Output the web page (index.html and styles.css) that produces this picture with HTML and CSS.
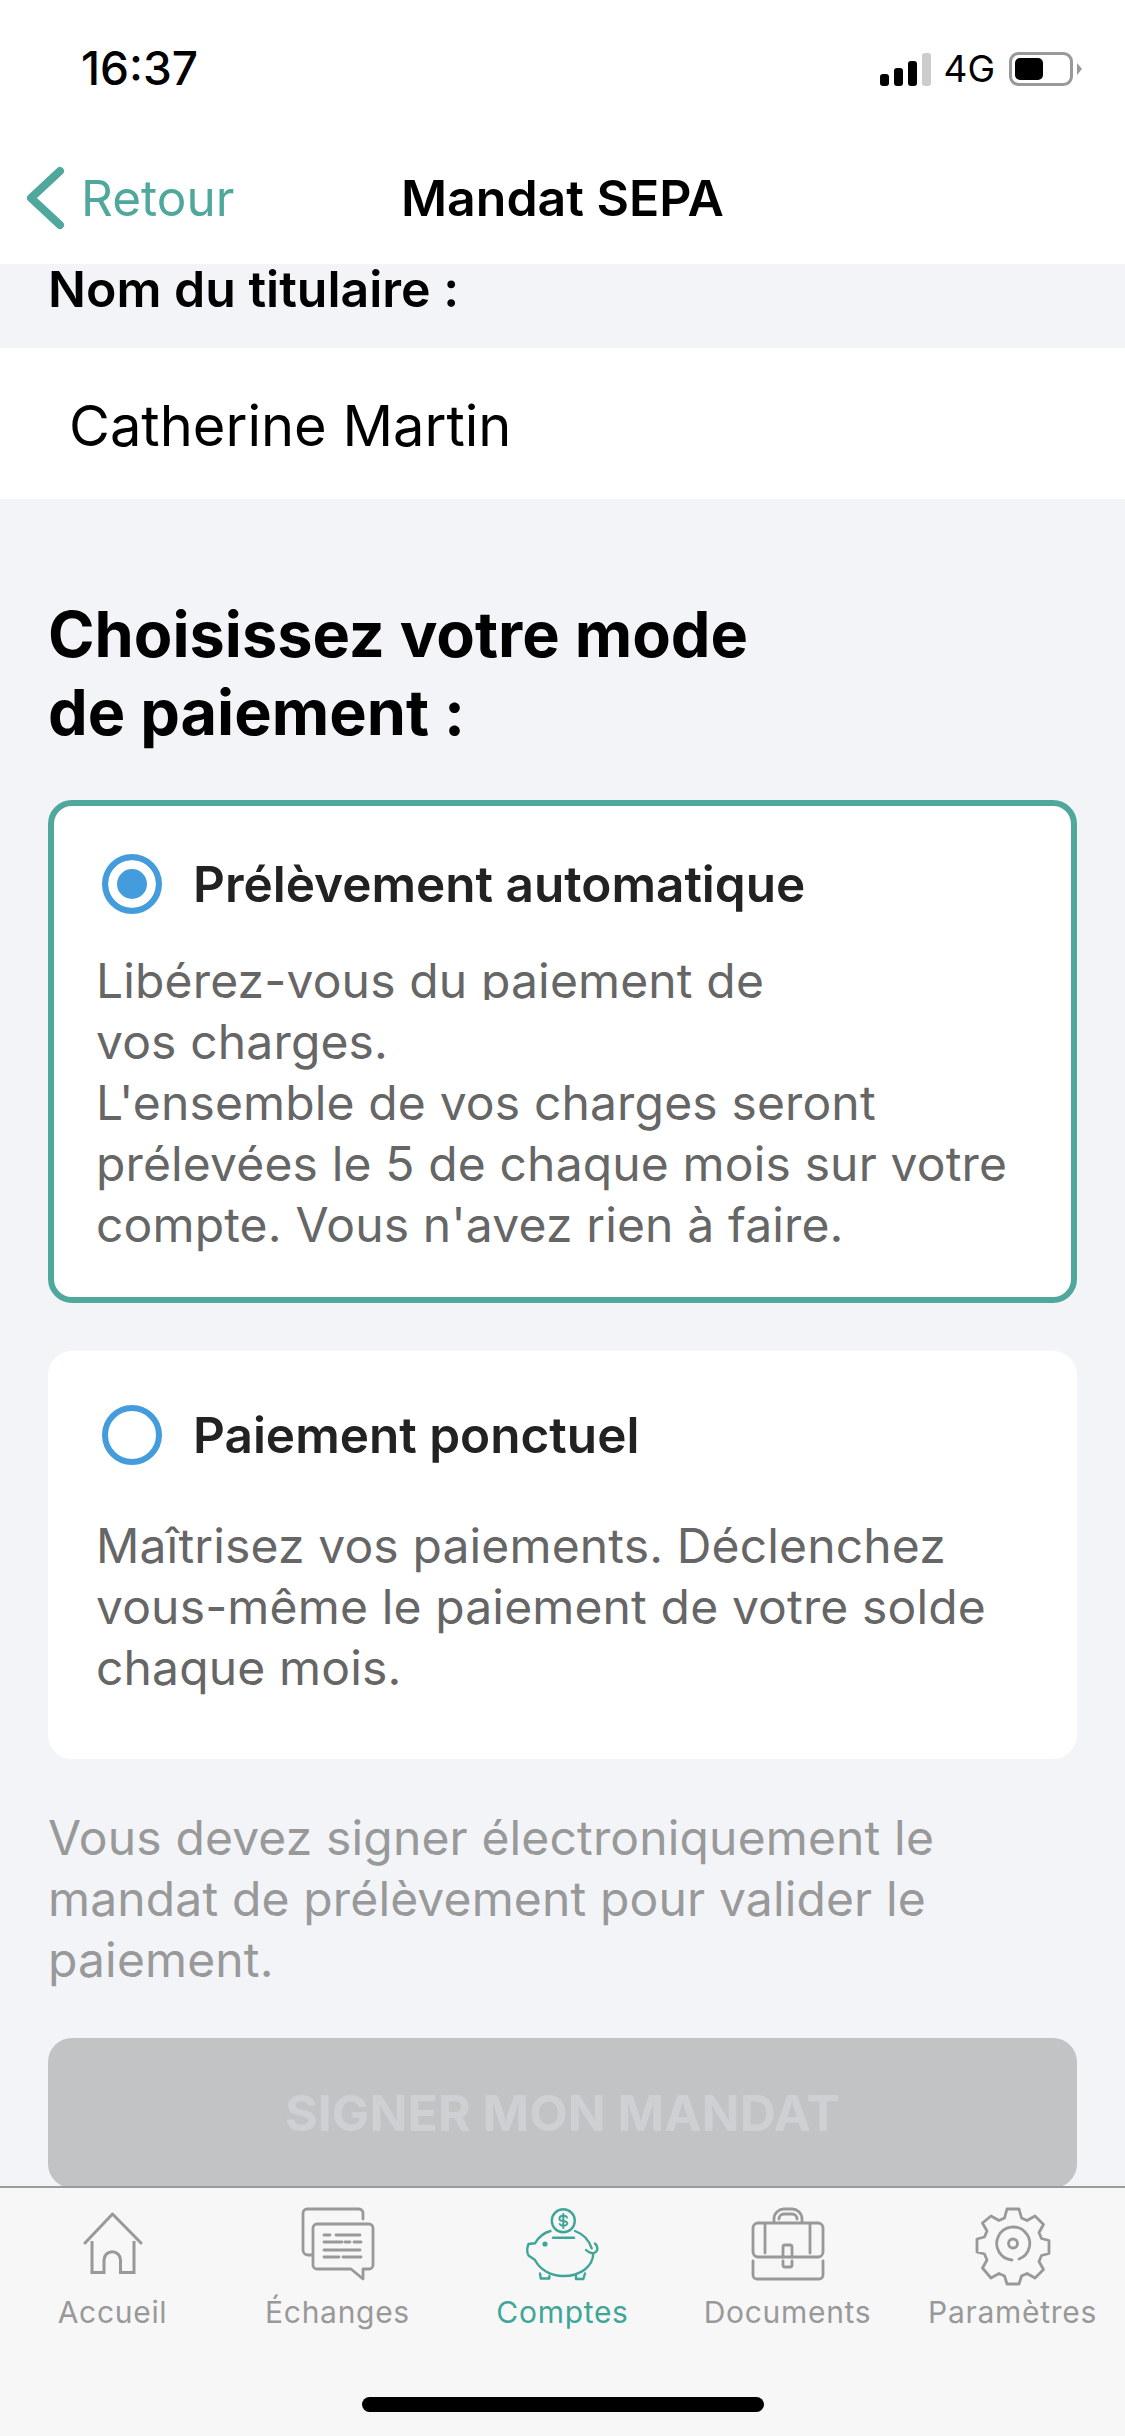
FILE: index.html
```html
<!DOCTYPE html>
<html lang="fr">
<head>
  <meta charset="UTF-8">
  <title>Mandat SEPA</title>
  <link rel="stylesheet" href="styles.css">
</head>
<body>
  <div class="screen">

    <div class="status-bar">
      <span class="time">16:37</span>
      <div class="status-right">
        <svg class="signal" width="51" height="33" viewBox="0 0 51 33">
          <rect x="0" y="21" width="9" height="12" rx="3" fill="#000"/>
          <rect x="14" y="15" width="9" height="18" rx="3" fill="#000"/>
          <rect x="28" y="8" width="9" height="25" rx="3" fill="#000"/>
          <rect x="42" y="0" width="9" height="33" rx="3" fill="#ccc"/>
        </svg>
        <span class="network">4G</span>
        <svg class="battery" width="73" height="34" viewBox="0 0 73 34">
          <rect x="1.500" y="1.500" width="61" height="31" rx="8" fill="none" stroke="#999" stroke-width="3"/>
          <rect x="6" y="6" width="28" height="22" rx="5" fill="#000"/>
          <path d="M68 11l5 6-5 6z" fill="#999"/>
        </svg>
      </div>
    </div>

    <div class="nav">
      <div class="back">
        <svg width="40" height="64" viewBox="0 0 40 64">
          <path d="M35 5L6 32l29 27" fill="none" stroke="#4fa89b" stroke-width="8" stroke-linecap="round" stroke-linejoin="round"/>
        </svg>
        <span>Retour</span>
      </div>
      <div class="nav-title">Mandat SEPA</div>
    </div>

    <div class="content">
      <div class="holder-label">Nom du titulaire :</div>
      <div class="holder-name">Catherine Martin</div>

      <h2 class="section-title">Choisissez votre mode<br>de paiement :</h2>

      <div class="option option-selected">
        <div class="option-head">
          <span class="radio radio-on"></span>
          <span class="option-title">Prélèvement automatique</span>
        </div>
        <p class="option-text"><span class="clipped-line">Libérez-vous du paiement de</span>vos charges.<br>L'ensemble de vos charges seront prélevées le 5 de chaque mois sur votre compte. Vous n'avez rien à faire.</p>
      </div>

      <div class="option option-plain">
        <div class="option-head">
          <span class="radio"></span>
          <span class="option-title">Paiement ponctuel</span>
        </div>
        <p class="option-text option-text-spaced">Maîtrisez vos paiements. Déclenchez vous-même le paiement de votre solde chaque mois.</p>
      </div>

      <p class="notice">Vous devez signer électroniquement le mandat de prélèvement pour valider le paiement.</p>

      <div class="sign-btn">SIGNER MON MANDAT</div>
    </div>

    <div class="tabbar">
      <div class="tabs">
        <div class="tab">
          <svg width="72" height="72" viewBox="0 0 72 72" fill="none" stroke="#999" stroke-width="3">
            <path d="M8 35L35.500 6 64 35" stroke-linecap="round" stroke-linejoin="round"/>
            <path d="M15 33V64.500H27V52a8.250 8.250 0 0 1 16.500 0V64.500H57V33"/>
          </svg>
          <span>Accueil</span>
        </div>
        <div class="tab">
          <svg width="72" height="72" viewBox="0 0 72 72" fill="none" stroke="#999" stroke-width="2.800" stroke-linecap="round" stroke-linejoin="round">
            <path d="M61 11V5a4 4 0 0 0-4-4H5a4 4 0 0 0-4 4v37a5 5 0 0 0 5 5h4"/>
            <path d="M15 16h52a4 4 0 0 1 4 4v37a4 4 0 0 1-4 4h-6v10L49 61H15a4 4 0 0 1-4-4V20a4 4 0 0 1 4-4z"/>
            <path d="M22 27h6M34 27h24M22 34h18M43 34h5M52 34h7M22 42h36M22 49h15M41 49h18"/>
          </svg>
          <span>Échanges</span>
        </div>
        <div class="tab tab-active">
          <svg width="72" height="72" viewBox="0 0 72 72" fill="none" stroke="#3fa697" stroke-width="2.400" stroke-linecap="round" stroke-linejoin="round">
            <circle cx="36.300" cy="12.700" r="11.500"/>
            <path d="M40 9.500c-1-2.500-7-2.500-7.500 0.500s1.500 2.500 3.800 3 4.700 1 3.900 3-6 2.500-7.500 0M36.300 6v14" stroke-width="2"/>
            <path d="M26 29.700h21"/>
            <path d="M23.500 23C16 25 11 30 8 35.300L1.500 36C0 40 0 45 1.500 47.500L8 52c5 10 16 16 28.300 16C54 68 66 58 66.300 45.500"/>
            <path d="M48 23c8 3 14 9 16.700 17.300"/>
            <path d="M59 42c3 3 6 4 9 2.500s3.500-6 0-9"/>
            <path d="M13 65.500l.8 5h8.500V68M58 65.500l-1.700 5.500H49V68"/>
            <circle cx="18" cy="36" r="1.400" fill="#3fa697"/>
          </svg>
          <span>Comptes</span>
        </div>
        <div class="tab">
          <svg width="72" height="72" viewBox="0 0 72 72" fill="none" stroke="#999" stroke-width="2.800" stroke-linecap="round" stroke-linejoin="round">
            <path d="M22 14V11C22 5 27 1 32 1h8c5 0 10 4 10 10v3M27 11c0-3 2-5 5-5h8c3 0 5 2 5 5"/>
            <rect x="1" y="15" width="70" height="34" rx="5"/>
            <path d="M1 53v14a4 4 0 0 0 4 4h62a4 4 0 0 0 4-4V53M13 16v29M58 16v29"/>
            <path d="M31 49V39a2 2 0 0 1 2-2h5a2 2 0 0 1 2 2v10M31 53v4a2 2 0 0 0 2 2h5a2 2 0 0 0 2-2v-4"/>
          </svg>
          <span>Documents</span>
        </div>
        <div class="tab">
          <svg width="72" height="72" viewBox="0 0 72 72" fill="none" stroke="#999" stroke-width="2.800" stroke-linecap="round" stroke-linejoin="round">
            <path d="M30 1h12l2.500 9 5.500 2.500 8-4.500 8.500 8.500-4.500 8 2.500 6 7.500 2v13l-7.500 2-2.500 6 4.500 8-8.500 8.500-8-4.500-5.500 2.500-2.500 8H30l-2.500-8-5.500-2.500-8 4.500L5.500 60l4.500-8-2.500-6L0 44V31l7.500-2 2.500-6-4.500-8L14 8l8 4.500 5.500-2.500z"/>
            <path d="M42 51a16.500 16.500 0 1 0-7 1"/>
            <circle cx="36" cy="35.500" r="4.500"/>
          </svg>
          <span>Paramètres</span>
        </div>
      </div>
      <div class="home-indicator"></div>
    </div>

  </div>
</body>
</html>
```

FILE: styles.css
```css
* {
  box-sizing: border-box;
}

html, body {
  margin: 0;
  padding: 0;
}

body {
  font-family: Inter, "Noto Sans", sans-serif;
  background: #f2f4f8;
  color: #000;
}

.screen {
  width: 1125px;
  height: 2436px;
  display: flex;
  flex-direction: column;
  overflow: hidden;
}

/* top bars */
.status-bar {
  height: 132px;
  background: #fff;
  padding: 44px 43px 0 81px;
  display: flex;
  justify-content: space-between;
  align-items: flex-start;
}

.time {
  font-size: 46px;
  font-weight: 500;
  line-height: 48px;
}

.status-right {
  display: flex;
  align-items: center;
  gap: 12px;
  height: 50px;
}

.network {
  font-size: 37px;
  line-height: 40px;
  margin-right: 2px;
}

.nav {
  height: 132px;
  background: #fff;
  display: grid;
  grid-template-columns: 1fr auto 1fr;
  align-items: center;
  align-content: start;
  padding-top: 33px;
}

.back {
  display: flex;
  align-items: center;
  gap: 16px;
  color: #4fa89b;
  font-size: 49.500px;
  line-height: 66px;
  padding-left: 25px;
}

.nav-title {
  font-size: 50px;
  font-weight: 600;
  line-height: 66px;
}

/* scrolling part */
.content {
  flex: 1;
  min-height: 0;
  display: flex;
  flex-direction: column;
}

.holder-label {
  height: 84px;
  padding-left: 48px;
  font-size: 50px;
  font-weight: 600;
  line-height: 50px;
  flex-shrink: 0;
}

.holder-name {
  height: 151px;
  background: #fff;
  padding: 6px 0 0 69px;
  font-size: 56px;
  line-height: 145px;
  flex-shrink: 0;
}

.section-title {
  margin: 96px 48px 49px;
  font-size: 63px;
  font-weight: 700;
  line-height: 78px;
}

.option {
  margin: 0 48px 48px;
  background: #fff;
  border-radius: 24px;
  flex-shrink: 0;
}

.option-selected {
  border: 6px solid #4fa89b;
  padding: 48px 42px 0;
  height: 503px;
}

.option-plain {
  padding: 54px 48px 0;
  height: 408px;
}

.option-head {
  display: flex;
  align-items: center;
  gap: 31px;
  padding-left: 6px;
  height: 60px;
}

.radio {
  width: 60px;
  height: 60px;
  border-radius: 50%;
  border: 6px solid #459cdd;
  flex-shrink: 0;
}

.radio-on {
  background: #459cdd;
  box-shadow: inset 0 0 0 9px #fff;
}

.option-title {
  font-size: 49.500px;
  font-weight: 600;
  color: #222;
}

.option-text {
  margin: 36px 0 0;
  color: #666;
  font-size: 48px;
  letter-spacing: 0.15px;
  line-height: 61px;
}

/* the first line is cut just under its baseline in the app */
.clipped-line {
  display: block;
  height: 50px;
  margin-bottom: 11px;
  overflow: hidden;
}

.option-text-spaced {
  margin-top: 50px;
}

.notice {
  margin: 0 48px 48px;
  color: #999;
  font-size: 48px;
  letter-spacing: 0.15px;
  line-height: 61px;
}

.sign-btn {
  margin: 0 48px;
  height: 150px;
  flex-shrink: 0;
  border-radius: 24px;
  background: #c2c3c5;
  color: #cfd0d3;
  font-size: 50px;
  font-weight: 700;
  text-align: center;
  line-height: 150px;
}

/* bottom tabs */
.tabbar {
  height: 250px;
  flex-shrink: 0;
  background: #f7f7f7;
  border-top: 2px solid #9b9b9b;
  display: flex;
  flex-direction: column;
}

.tabs {
  display: flex;
  padding-top: 20px;
}

.tab {
  flex: 1;
  display: flex;
  flex-direction: column;
  align-items: center;
  gap: 12px;
  color: #999;
  font-size: 30px;
  letter-spacing: 0.7px;
  line-height: 40px;
}

.tab svg {
  overflow: visible;
}

.tab-active {
  color: #3fa697;
}

.home-indicator {
  width: 402px;
  height: 15px;
  border-radius: 8px;
  background: #000;
  margin: 65px auto 0;
}
```
